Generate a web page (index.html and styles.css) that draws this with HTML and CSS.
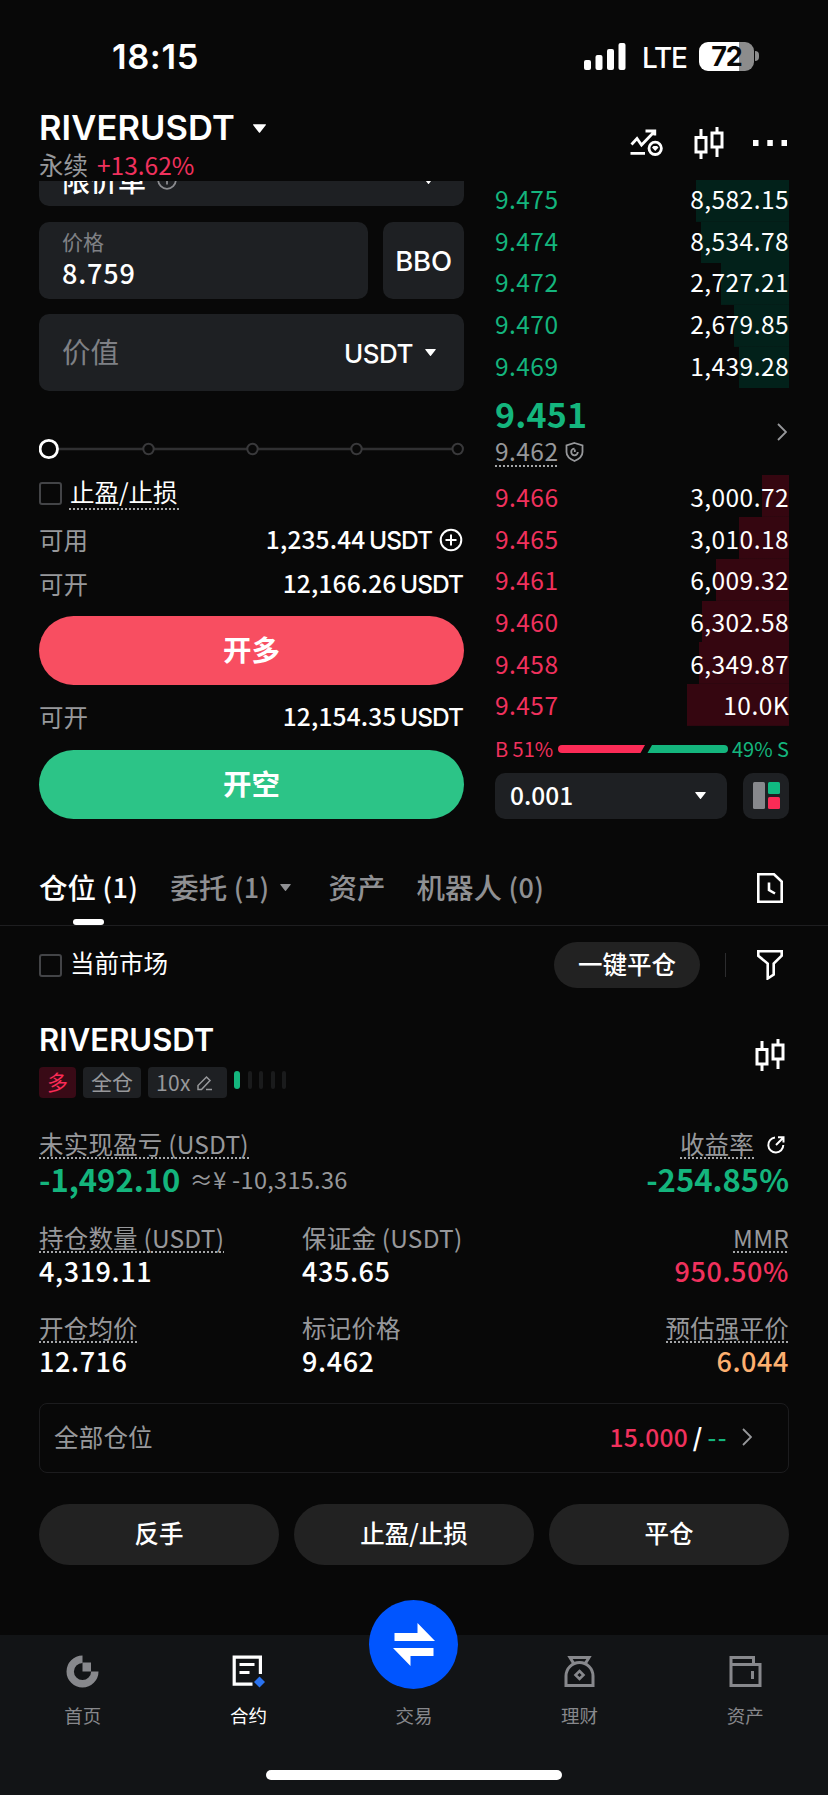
FILE: index.html
```html
<!DOCTYPE html>
<html lang="zh-CN">
<head>
<meta charset="utf-8">
<title>RIVERUSDT</title>
<link rel="stylesheet" href="styles.css">
</head>
<body>
<svg class="defs" width="0" height="0">
  <symbol id="candles" viewBox="0 0 30 32"><path d="M7 2v8M7 26v6M23 0v6M23 20v10M2 10.500h10v14.500H2zM18 6h10v14H18z" fill="none" stroke="currentColor" stroke-width="3"/></symbol>
  <symbol id="caret" viewBox="0 0 12 8"><path d="M.5 0h11a.5.5 0 0 1 .4.800L6.500 7.600a.6.6 0 0 1-1 0L.1.800A.5.5 0 0 1 .5 0z" fill="currentColor"/></symbol>
  <symbol id="chevron" viewBox="0 0 10 18"><path d="M1 1l8 8-8 8" fill="none" stroke="currentColor" stroke-width="1.800"/></symbol>
</svg>
<div class="phone">
  <header class="status">
    <div class="clock">18:15</div>
    <div class="status-right">
      <svg width="42" height="27" viewBox="0 0 42 27" fill="#fff"><rect x="0" y="17" width="7" height="10" rx="2"/><rect x="11.500" y="12" width="7" height="15" rx="2"/><rect x="23" y="6" width="7" height="21" rx="2"/><rect x="34.500" y="0" width="7" height="27" rx="2"/></svg>
      <span class="lte">LTE</span>
      <div class="battery">72</div>
      <i class="nub"></i>
    </div>
  </header>

  <div class="pair">
    <div class="pair-info">
      <div class="pair-name"><span class="symbol">RIVERUSDT</span><svg class="caret-lg"><use href="#caret"/></svg></div>
      <div class="pair-sub"><span>永续</span><span class="change">+13.62%</span></div>
    </div>
    <div class="pair-icons">
      <svg width="33" height="28" viewBox="0 0 33 28" fill="none" stroke="#fff" stroke-width="2.800"><path d="M1.500 15.500L7 9.500l4.500 6.500L24 3M15.500 2h9.300v4.500M.5 24.300h14.500"/><circle cx="25.200" cy="19.300" r="6.200"/><path d="M22 18.500l1.500-1.500h3.500l1.500 1.500-3.250 3.500z" fill="#fff" stroke="none"/></svg>
      <svg width="30" height="32"><use href="#candles"/></svg>
      <svg class="dots" width="34" height="6" fill="#fff"><rect width="5.500" height="6"/><rect x="14.300" width="5.500" height="6"/><rect x="28.500" width="5.500" height="6"/></svg>
    </div>
  </div>

  <section class="trade">
    <div class="form">
      <div class="field order-type">
        <div class="order-type-inner"><span>限价单</span>
          <svg width="20" height="20" viewBox="0 0 20 20" fill="none" stroke="#8a8b8f" stroke-width="1.800"><circle cx="10" cy="10" r="8.800"/><path d="M10 8.500v6"/></svg>
          <svg class="caret-sm push"><use href="#caret"/></svg></div>
      </div>
      <div class="price-row">
        <div class="field price"><span class="price-label">价格</span><span class="price-value">8.759</span></div>
        <div class="field bbo">BBO</div>
      </div>
      <div class="field amount"><span class="amount-label">价值</span><span class="unit">USDT</span><svg class="caret-sm"><use href="#caret"/></svg></div>
      <svg class="slider" width="425" height="22" viewBox="0 0 425 22" fill="#080808"><path d="M19 11h400" stroke="#303032" stroke-width="2.500"/><g stroke="#39393b" stroke-width="2"><circle cx="109.500" cy="11" r="5.200"/><circle cx="213.500" cy="11" r="5.200"/><circle cx="317.500" cy="11" r="5.200"/><circle cx="418.700" cy="11" r="5.200"/></g><circle cx="9.800" cy="11" r="8.700" stroke="#fff" stroke-width="2.800"/></svg>
      <div class="tpsl"><i class="check"></i><span class="dotted">止盈/止损</span></div>
      <div class="info first"><span>可用</span><b>1,235.44 <em>USDT</em></b><svg class="plus" width="24" height="24" viewBox="0 0 24 24" fill="none" stroke="#fff" stroke-width="2"><circle cx="12" cy="12" r="10.300"/><path d="M6.500 12h11M12 6.500v11"/></svg></div>
      <div class="info"><span>可开</span><b>12,166.26 <em>USDT</em></b></div>
      <button class="cta long">开多</button>
      <div class="info second"><span>可开</span><b>12,154.35 <em>USDT</em></b></div>
      <button class="cta short">开空</button>
    </div>

    <div class="book">
      <div class="side up">
        <div class="level" style="--depth:93.500px"><span>9.475</span><b>8,582.15</b></div>
        <div class="level" style="--depth:88px"><span>9.474</span><b>8,534.78</b></div>
        <div class="level" style="--depth:68.500px"><span>9.472</span><b>2,727.21</b></div>
        <div class="level" style="--depth:55px"><span>9.470</span><b>2,679.85</b></div>
        <div class="level" style="--depth:50px"><span>9.469</span><b>1,439.28</b></div>
      </div>
      <div class="last">
        <div><div class="last-price">9.451</div>
        <div class="mark"><span class="dotted">9.462</span><svg width="19" height="20" viewBox="0 0 19 20" fill="none" stroke="#97989b" stroke-width="1.800"><path d="M9.500 1l8 2.500v6.500c0 4-3.300 7-8 9-4.700-2-8-5-8-9V3.500z"/><path d="M9.500 6.700a3.300 3.300 0 1 0 3.300 3.300M9.800 10V7.500"/></svg></div></div>
        <svg class="chev"><use href="#chevron"/></svg>
      </div>
      <div class="side down">
        <div class="level" style="--depth:27px"><span>9.466</span><b>3,000.72</b></div>
        <div class="level" style="--depth:50px"><span>9.465</span><b>3,010.18</b></div>
        <div class="level" style="--depth:73.500px"><span>9.461</span><b>6,009.32</b></div>
        <div class="level" style="--depth:87px"><span>9.460</span><b>6,302.58</b></div>
        <div class="level" style="--depth:90.500px"><span>9.458</span><b>6,349.87</b></div>
        <div class="level" style="--depth:102px"><span>9.457</span><b>10.0K</b></div>
      </div>
      <div class="ratio"><span class="red">B 51%</span>
        <svg width="170" height="8" viewBox="0 0 170 8"><path d="M4 0h83l-4.500 8H4a4 4 0 0 1 0-8z" fill="#fb2b56"/><path d="M94 0h72a4 4 0 0 1 0 8H89.500z" fill="#14b57d"/></svg>
        <span class="green">49% S</span></div>
      <div class="precision">
        <div class="field step"><span>0.001</span><svg class="caret-sm"><use href="#caret"/></svg></div>
        <div class="field layout"><svg width="27" height="27"><rect width="12" height="27" rx="1.500" fill="#87888c"/><rect x="15" width="12" height="12" rx="1.500" fill="#10b981"/><rect x="15" y="15" width="12" height="12" rx="1.500" fill="#fb2b56"/></svg></div>
      </div>
    </div>
  </section>

  <nav class="tabs">
    <span class="tab active">仓位 <i>(1)</i></span>
    <span class="tab orders">委托 <i>(1)</i><svg class="caret-sm"><use href="#caret"/></svg></span>
    <span class="tab assets">资产</span>
    <span class="tab bots">机器人 <i>(0)</i></span>
    <svg class="push history" width="26" height="30" viewBox="0 0 26 30" fill="none" stroke="#fff" stroke-width="2.600"><path d="M1.300 1.300h15.700l7.700 7.200v20.200H1.300zM12 9.500v7.500l6 3.500"/></svg>
  </nav>

  <div class="filter">
    <i class="check"></i><span>当前市场</span>
    <button class="close-all">一键平仓</button><i class="sep"></i>
    <svg width="26" height="30" viewBox="0 0 26 30" fill="none" stroke="#fff" stroke-width="2.600"><path d="M1.300 1.300h23.400v4.500L16.700 13.500v11l-6 4V13.500L1.300 5.800z"/></svg>
  </div>

  <section class="position">
    <div class="pos-head">
      <div>
        <div class="pos-symbol">RIVERUSDT</div>
        <div class="tags"><span class="tag side-tag">多</span><span class="tag">全仓</span><span class="tag lev">10x<svg width="16" height="16" viewBox="0 0 16 16" fill="none" stroke="#97989b" stroke-width="1.500"><path d="M1 14.500v-4L9.500 2 13 5.500 4.500 14.500zM9 14.500h6"/></svg></span>
          <span class="adl"><i class="on"></i><i></i><i></i><i></i><i></i></span></div>
      </div>
      <svg class="pos-chart" width="30" height="32"><use href="#candles"/></svg>
    </div>

    <div class="pnl">
      <div><span class="label dotted">未实现盈亏 (USDT)</span><div class="pnl-value green"><strong>-1,492.10</strong><small>≈¥ -10,315.36</small></div></div>
      <div class="right"><div class="roi-label"><span class="label dotted">收益率</span><svg width="18" height="18" viewBox="0 0 18 18" fill="none" stroke="#fff" stroke-width="2"><path d="M8 1.500A7.500 7.500 0 1 0 16.300 9M9 9l7-7M11 1.300h5.500v5.200"/></svg></div><div class="pnl-value green"><strong class="roi">-254.85%</strong></div></div>
    </div>
    <div class="metrics">
      <div><span class="label dotted">持仓数量 (USDT)</span><strong>4,319.11</strong></div>
      <div><span class="label">保证金 (USDT)</span><strong>435.65</strong></div>
      <div class="right"><span class="label dotted">MMR</span><strong class="red">950.50%</strong></div>
      <div><span class="label dotted">开仓均价</span><strong>12.716</strong></div>
      <div><span class="label">标记价格</span><strong>9.462</strong></div>
      <div class="right"><span class="label dotted">预估强平价</span><strong class="orange">6.044</strong></div>
    </div>
    <div class="all-pos"><span>全部仓位</span><p><b class="red">15.000</b><b class="slash">/</b><b class="green dash">--</b></p><svg class="chev"><use href="#chevron"/></svg></div>
    <div class="actions"><button>反手</button><button>止盈/止损</button><button>平仓</button></div>
  </section>

  <footer class="navbar">
    <div class="nav-items">
      <div class="nav-item"><svg width="33" height="33" viewBox="0 0 33 33"><path d="M16.500 4.200A12.300 12.300 0 1 0 28.800 16.500" fill="none" stroke="#87888c" stroke-width="7.400"/><path d="M16.500 7.500H25v9h-8.500z" fill="#87888c"/></svg><span>首页</span></div>
      <div class="nav-item active"><svg width="33" height="33" viewBox="0 0 33 33" fill="none" stroke="#fff" stroke-width="3.200"><path d="M28.400 19V2.200H2.200v27h18.300M7.500 9.500h15M7.500 17.500h10"/><path d="M27.500 21.500l5.500 5.500-5.500 5.500-5.500-5.500z" fill="#2a73f0" stroke="none"/></svg><span>合约</span></div>
      <div class="nav-item trade-tab"><i class="trade-btn"><svg width="42" height="43" viewBox="0 0 42 43" fill="#fff"><path d="M1.500 10H24.500V0L42 18H1.500zM40.500 33H17.500v10L0 25h40.500z"/></svg></i><span>交易</span></div>
      <div class="nav-item"><svg width="31" height="33" viewBox="0 0 31 33" fill="none" stroke="#87888c" stroke-width="3"><path d="M10 9L6 2.500h19L21 9M2 30.500V21a13.500 13.500 0 0 1 27 0v9.500z"/><path d="M15.500 16l4 4-4 4-4-4z" stroke-width="2.600"/></svg><span>理财</span></div>
      <div class="nav-item"><svg width="33" height="33" viewBox="0 0 33 33" fill="none" stroke="#87888c" stroke-width="3"><path d="M2 9V2.500h22.500V9M2 9.500h29v21H2zM23.500 16v8"/></svg><span>资产</span></div>
    </div>
    <i class="home-bar"></i>
  </footer>
</div>
</body>
</html>
```
FILE: styles.css
```css
* { box-sizing: border-box; }
body { margin: 0; background: #080808; color: #fff; font-family: "Noto Sans CJK SC", "Noto Sans", sans-serif; font-size: 24.500px; line-height: 1; }
i, em { font-style: normal; }
b, strong { font-weight: 500; }
p { margin: 0; }
button { border: 0; padding: 0 0 2px; color: #fff; font: inherit; font-weight: 500; }
svg { display: block; flex: none; }
.defs { position: absolute; }
.phone { width: 828px; height: 1795px; display: flex; flex-direction: column; overflow: hidden; }
.red { color: #f0315d; }
.green { color: #14b57d; }
.orange { color: #fdb070; }
.push { margin-left: auto; }
.caret-lg { width: 13px; height: 9px; }
.caret-sm { width: 11px; height: 7px; }
.chev { width: 10px; height: 18px; color: #97989b; }
.dotted { background: repeating-linear-gradient(90deg, #a5a6a8 0 2px, transparent 2px 4px) left bottom / 100% 2px no-repeat; }
.check { width: 23px; height: 23px; border: 2px solid #434447; border-radius: 3px; flex: none; }
.field { background: #1e2023; border-radius: 10px; }

/* Status bar */
.status { height: 98px; padding: 41px 69px 0 112px; display: flex; justify-content: space-between; font-family: Inter, sans-serif; }
.clock { font-size: 34.500px; font-weight: 600; line-height: 31px; letter-spacing: .6px; }
.status-right { height: 30px; display: flex; align-items: center; }
.lte { margin: 3px 0 0 16px; width: 42px; font-size: 28px; font-weight: 500; letter-spacing: -1.200px; }
.battery { width: 55px; height: 29px; margin-left: 15px; border-radius: 9px; background: linear-gradient(90deg, #fff 72%, #8c8c8c 72%); color: #080808; font-size: 27px; font-weight: 700; line-height: 29px; text-align: center; letter-spacing: -1px; }
.nub { width: 4px; height: 10px; margin-left: 1px; border-radius: 0 4px 4px 0; background: #8c8c8c; }

/* Pair header */
.pair { height: 83px; padding: 0 41px 0 39px; display: flex; justify-content: space-between; }
.pair-name { height: 61px; display: flex; align-items: center; gap: 18px; }
.symbol, .pos-symbol { font-family: Inter, sans-serif; font-weight: 600; }
.symbol { font-size: 34.500px; letter-spacing: .1px; }
.pair-sub { margin-top: -8px; height: 30px; line-height: 28px; display: flex; gap: 9px; color: #97989b; }
.change { color: #f0315d; }
.pair-icons { height: 89px; display: flex; align-items: center; gap: 31px; }
.dots { margin-left: -2px; }

/* Order form */
.trade { padding: 0 39px; display: flex; gap: 31px; }
.form { width: 425px; display: flex; flex-direction: column; }
.order-type { height: 25px; overflow: hidden; border-radius: 0 0 10px 10px; }
.order-type-inner { height: 52px; margin-top: -27px; padding: 0 30px 0 23px; display: flex; align-items: center; gap: 11px; font-size: 28px; font-weight: 500; }
.price-row { margin-top: 16px; display: flex; gap: 15px; }
.price { width: 329px; height: 77px; padding: 8px 23px; display: flex; flex-direction: column; }
.price-label { color: #7f8085; font-size: 21px; line-height: 22px; }
.price-value { font-size: 27px; font-weight: 500; line-height: 41px; letter-spacing: .8px; }
.bbo { flex: 1; display: flex; align-items: center; justify-content: center; padding-top: 2px; font-family: Inter, sans-serif; font-weight: 500; font-size: 27.500px; letter-spacing: -.2px; }
.amount { height: 77px; margin-top: 15px; padding: 0 28px 0 23px; display: flex; align-items: center; }
.amount-label { color: #7f8085; font-size: 28.500px; margin-top: -3px; }
.unit { margin: 2px 12px 0 auto; font-family: Inter, sans-serif; font-size: 26px; font-weight: 500; letter-spacing: -.5px; }
.slider { margin-top: 47px; }
.tpsl { height: 30px; margin-top: 18px; display: flex; align-items: center; gap: 7px; }
.tpsl .dotted { margin-top: 1px; height: 32px; line-height: 28px; padding: 0 1px; }
.info { height: 44px; padding-right: 1px; display: flex; align-items: center; justify-content: space-between; color: #97989b; }
.info b { margin-left: auto; color: #fff; letter-spacing: .15px; }
.info em { margin-left: -2px; font-family: Inter, sans-serif; letter-spacing: -1px; }
.info.first { margin-top: 10px; }
.info.second { margin-top: 10px; }
.plus { margin-left: 7px; }
.cta { width: 425px; height: 69px; border-radius: 35px; font-size: 28.500px; font-weight: 700; }
.long { margin-top: 10px; background: #f84e61; }
.short { margin-top: 11px; background: #2cc487; }

/* Order book */
.book { width: 294px; }
.level { height: 41.700px; display: flex; align-items: center; justify-content: space-between; background: linear-gradient(var(--tint), var(--tint)) right / var(--depth) 100% no-repeat; letter-spacing: .45px; }
.level b { font-weight: 400; }
.up { margin-top: -1px; color: #14b57d; --tint: #02211a; }
.up .level { padding-bottom: 3px; }
.down { color: #f0315d; --tint: #350610; }
.down .level { padding-top: 2px; }
.level b { color: #fff; }
.last { height: 87px; padding-right: 2px; display: flex; justify-content: space-between; align-items: center; }
.last-price { height: 41px; color: #14b57d; font-size: 34px; font-weight: 700; line-height: 36px; letter-spacing: .2px; }
.mark { height: 30px; display: flex; align-items: center; gap: 7px; color: #97989b; letter-spacing: .45px; }
.mark .dotted { height: 30px; line-height: 27px; }
.ratio { height: 47px; display: flex; align-items: center; justify-content: space-between; font-size: 20px; }
.precision { display: flex; justify-content: space-between; }
.step { width: 232px; height: 46px; padding: 0 21px 0 15px; display: flex; align-items: center; justify-content: space-between; font-weight: 500; }
.layout { width: 46px; height: 46px; display: flex; align-items: center; justify-content: center; }

/* Tabs */
.tabs { height: 107px; padding: 38px 45px 0 39px; display: flex; align-items: center; border-bottom: 1px solid #1e1e20; font-size: 28.500px; font-weight: 500; color: #8f9093; }
.tab { height: 68px; line-height: 60px; display: flex; white-space: pre; position: relative; }
.tab i { font-size: 27px; letter-spacing: .4px; }
.tab .caret-sm { margin: 27px 0 0 10px; }
.tab.active { color: #fff; }
.tab.active::after { content: ""; position: absolute; left: 34px; bottom: 0; width: 31px; height: 6px; border-radius: 3px; background: #fff; }
.orders { margin-left: 32px; }
.assets { margin-left: 38px; }
.bots { margin-left: 31px; }
.history { margin-bottom: 7px; }

/* Filter row */
.filter { height: 78px; padding: 0 45px 0 39px; display: flex; align-items: center; }
.filter span { margin: -3px 0 0 8px; }
.close-all { width: 146px; height: 46px; margin-left: auto; border-radius: 23px; background: #222; }
.sep { width: 1px; height: 24px; margin: 0 31px 0 25px; background: #2c2c2e; }

/* Position card */
.position { padding: 16px 39px 0; }
.pos-head { display: flex; justify-content: space-between; }
.pos-symbol { height: 40px; line-height: 40px; font-size: 31px; letter-spacing: 0; }
.pos-chart { margin: 19px 4px 0 0; }
.tags { height: 31px; margin-top: 7px; display: flex; gap: 7px; }
.tag { padding: 0 8px; border-radius: 4px; background: #1e2023; color: #97989b; font-size: 21px; line-height: 29px; }
.side-tag { background: #390a16; color: #fb2b56; }
.lev { width: 79px; display: flex; align-items: center; gap: 6px; letter-spacing: .4px; }
.adl { display: flex; gap: 7.500px; padding-top: 4px; }
.adl i { width: 4px; height: 18px; border-radius: 2px; background: #1a1b1c; }
.adl .on { width: 6px; border-radius: 3px; background: #14b57d; }
.label { display: inline-block; height: 29px; line-height: 27px; color: #97989b; letter-spacing: .2px; }
.right { text-align: right; }
.pnl { margin-top: 32px; height: 94px; display: flex; justify-content: space-between; }
.pnl-value { height: 39px; display: flex; align-items: center; gap: 9px; justify-content: flex-start; }
.pnl-value strong { font-size: 31px; font-weight: 700; }
.pnl-value small { margin-top: 2px; font-size: 23.500px; color: #97989b; letter-spacing: .3px; }
.pnl .right .pnl-value { justify-content: flex-end; }
.roi-label { display: flex; gap: 13px; align-items: center; justify-content: flex-end; padding-right: 4px; }
.metrics { display: grid; grid-template-columns: 263px 1fr 1fr; row-gap: 22px; }
.metrics > div { height: 68px; }
.metrics strong { display: block; height: 38px; line-height: 36px; font-size: 27px; letter-spacing: .6px; }
.all-pos { height: 70px; margin-top: 21px; padding: 0 36px 2px 14px; display: flex; align-items: center; border: 1.500px solid #1c1c1e; border-radius: 8px; color: #97989b; letter-spacing: .2px; }
.all-pos p { margin: 0 14px 0 auto; display: flex; color: #fff; }
.slash { margin: 0 5px; font-weight: 700; }
.dash { letter-spacing: 1.500px; }
.actions { margin-top: 31px; display: grid; grid-template-columns: repeat(3, 1fr); gap: 15px; }
.actions button { height: 61px; border-radius: 31px; background: #222; }

/* Bottom navigation */
.navbar { height: 160.500px; margin-top: auto; background: #121416; }
.nav-items { height: 135px; display: flex; }
.nav-item { flex: 1; padding-top: 20px; display: flex; flex-direction: column; align-items: center; color: #87888c; font-size: 18.500px; }
.nav-item span { margin-top: 18px; }
.nav-item.active { color: #fff; }
.trade-btn { width: 89px; height: 89px; margin: -54px 0 0; border-radius: 50%; background: #0055ff; display: flex; align-items: center; justify-content: center; flex: none; }
.trade-tab { padding-top: 19px; }
.trade-tab span { margin-top: 17px; }
.home-bar { display: block; width: 296px; height: 10px; margin: 0 auto; border-radius: 5px; background: #fff; }
```
